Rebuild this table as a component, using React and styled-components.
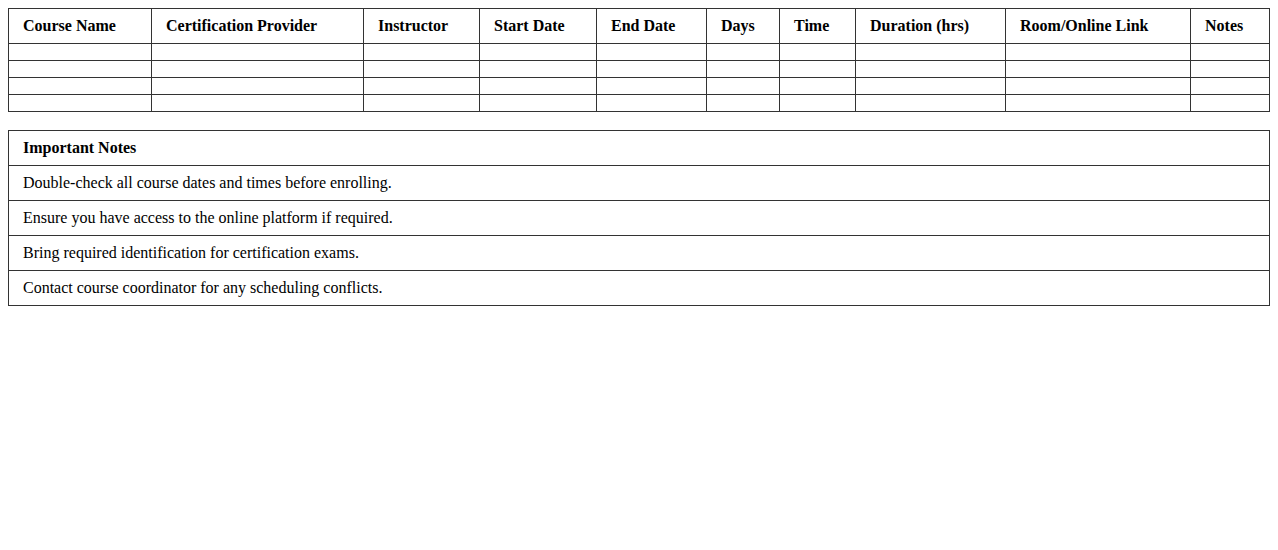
import React from "react";
import styled, { createGlobalStyle } from "styled-components";

const GlobalStyle = createGlobalStyle`
  body {
    margin: 8px;
    background: #fff;
    font-family: "Liberation Serif", "Times New Roman", serif;
    font-size: 16px;
    color: #000;
  }
`;

const Table = styled.table`
  width: 100%;
  border-collapse: collapse;
  table-layout: fixed;
  margin-bottom: ${({ $gap }) => $gap || 0}px;
`;

const Col = styled.col`
  width: ${({ $w }) => ($w ? `${$w}px` : "auto")};
`;

const HeadCell = styled.th`
  border: 1px solid #333;
  padding: 8px 14px;
  text-align: left;
  font-weight: bold;
  white-space: nowrap;
`;

const Cell = styled.td`
  border: 1px solid #333;
  padding: 8px 14px;
  text-align: left;
`;

const columns = [
  ["Course Name", 143],
  ["Certification Provider", 212],
  ["Instructor", 116],
  ["Start Date", 117],
  ["End Date", 110],
  ["Days", 73],
  ["Time", 76],
  ["Duration (hrs)", 150],
  ["Room/Online Link", 185],
  ["Notes", 0],
];

const notes = [
  "Double-check all course dates and times before enrolling.",
  "Ensure you have access to the online platform if required.",
  "Bring required identification for certification exams.",
  "Contact course coordinator for any scheduling conflicts.",
];

export default function App() {
  return (
    <>
      <GlobalStyle />
      <Table $gap={18}>
        <colgroup>
          {columns.map(([name, w]) => (
            <Col key={name} $w={w} />
          ))}
        </colgroup>
        <thead>
          <tr>
            {columns.map(([name]) => (
              <HeadCell key={name}>{name}</HeadCell>
            ))}
          </tr>
        </thead>
        <tbody>
          {[0, 1, 2, 3].map(r => (
            <tr key={r}>
              {columns.map(([name]) => (
                <Cell key={name} />
              ))}
            </tr>
          ))}
        </tbody>
      </Table>

      <Table>
        <thead>
          <tr>
            <HeadCell>Important Notes</HeadCell>
          </tr>
        </thead>
        <tbody>
          {notes.map(n => (
            <tr key={n}>
              <Cell>{n}</Cell>
            </tr>
          ))}
        </tbody>
      </Table>
    </>
  );
}
